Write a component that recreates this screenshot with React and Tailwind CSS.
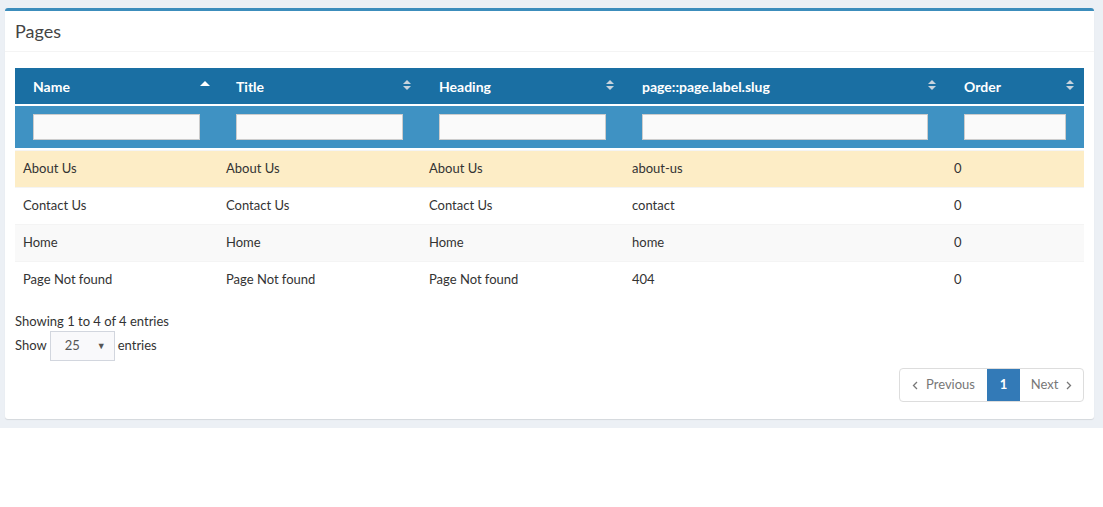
import React from "react";

const cols = [
  { key: "name", label: "Name", w: "w-[203px]", sort: "asc" },
  { key: "title", label: "Title", w: "w-[203px]" },
  { key: "heading", label: "Heading", w: "w-[203px]" },
  { key: "slug", label: "page::page.label.slug", w: "w-[322px]" },
  { key: "order", label: "Order", w: "w-[138px]" },
];

const rows = [
  ["About Us", "About Us", "About Us", "about-us", "0"],
  ["Contact Us", "Contact Us", "Contact Us", "contact", "0"],
  ["Home", "Home", "Home", "home", "0"],
  ["Page Not found", "Page Not found", "Page Not found", "404", "0"],
];

function SortIcon({ dir }) {
  if (dir === "asc") {
    return (
      <svg width="10" height="10" viewBox="0 0 10 10" className="absolute right-[8px] top-[11px]">
        <path d="M0 7 L5 2 L10 7 Z" fill="#fff" />
      </svg>
    );
  }
  return (
    <svg width="8" height="12" viewBox="0 0 8 12" className="absolute right-[10px] top-[11px]">
      <path d="M0 5 L4 1 L8 5 Z" fill="#c8d3dd" />
      <path d="M0 7 L4 11 L8 7 Z" fill="#c8d3dd" />
    </svg>
  );
}

export default function App() {
  return (
    <div className="w-[1103px] min-h-[507px] bg-white font-['Lato','Liberation_Sans',sans-serif] text-[#333]">
      <div className="bg-[#ecf0f5] pt-[8px] pl-[5px] pr-[9px] pb-[9px]">
        <div className="bg-white border-t-[3px] border-[#3c8dbc] rounded-[3px] shadow-[0_1px_1px_rgba(0,0,0,0.1)]">
          <div className="h-[41px] px-[10px] pt-[10px] border-b border-[#f4f4f4]">
            <h3 className="text-[18px] leading-[20px] text-[#444]">Pages</h3>
          </div>
          <div className="px-[10px] pt-[16px] pb-[17px]">
            <table className="w-[1069px] table-fixed border-collapse text-[13px]">
              <thead>
                <tr className="bg-[#1a6fa3] text-white h-[36px]">
                  {cols.map((c) => (
                    <th key={c.key} className={`${c.w} relative text-left font-bold pl-[18px] text-[14px]`}>
                      {c.label}
                      <SortIcon dir={c.sort} />
                    </th>
                  ))}
                </tr>
                <tr className="h-[2px] bg-white"><td colSpan={5} className="p-0 h-[2px]"></td></tr>
                <tr className="bg-[#3f92c3] h-[42px]">
                  {cols.map((c) => (
                    <td key={c.key} className="px-[18px]">
                      <input className="block w-full h-[26px] bg-[#fafafa] border border-[#ccc] outline-none" />
                    </td>
                  ))}
                </tr>
                <tr className="h-[2px] bg-white"><td colSpan={5} className="p-0 h-[2px]"></td></tr>
              </thead>
              <tbody>
                {rows.map((r, i) => (
                  <tr
                    key={i}
                    className={`h-[37px] border-t border-[#f4f4f4] ${i === 0 ? "bg-[#fdedc6]" : i % 2 === 0 ? "bg-[#f9f9f9]" : "bg-white"}`}
                  >
                    {r.map((v, j) => (
                      <td key={j} className="px-[8px]">{v}</td>
                    ))}
                  </tr>
                ))}
              </tbody>
            </table>

            <div className="mt-[14px] text-[13px] leading-[18px]">Showing 1 to 4 of 4 entries</div>
            <div className="flex items-center gap-[3px] text-[13px] mt-[1px]">
              <span>Show</span>
              <div className="relative w-[65px] h-[30px] border border-[#d2d6de] bg-[#f9f9fb] flex items-center pl-[14px] text-[#555]">
                <span className="text-[13px]">25</span>
                <span className="absolute right-[8px] top-[7px] text-[9px] text-[#555]">▼</span>
              </div>
              <span>entries</span>
            </div>
            <div className="flex justify-end mt-[7px]">
              <div className="flex h-[34px] text-[13px] rounded-[4px] border border-[#ddd] overflow-hidden">
                <div className="flex items-center justify-center text-[#777] gap-[8px] w-[87px]">
                  <svg width="6" height="9" viewBox="0 0 6 9"><path d="M5 1 L1.5 4.5 L5 8" stroke="#777" strokeWidth="1.3" fill="none" /></svg>
                  Previous
                </div>
                <div className="flex items-center justify-center w-[33px] bg-[#337ab7] text-white font-bold">1</div>
                <div className="flex items-center justify-center w-[63px] text-[#777] gap-[8px]">
                  Next
                  <svg width="6" height="9" viewBox="0 0 6 9"><path d="M1 1 L4.5 4.5 L1 8" stroke="#777" strokeWidth="1.3" fill="none" /></svg>
                </div>
              </div>
            </div>
          </div>
        </div>
      </div>
    </div>
  );
}
